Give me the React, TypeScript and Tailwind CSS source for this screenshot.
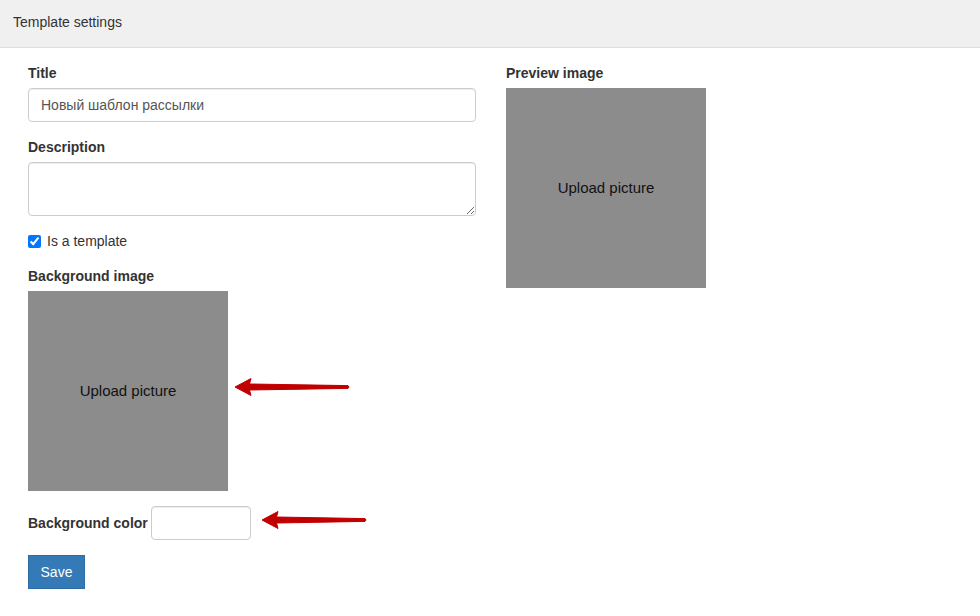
import React from 'react';

const font = { fontFamily: '"Liberation Sans", Arial, sans-serif' };

const Arrow = ({ length }: { length: number }) => (
  <svg width={length + 4} height="22" viewBox={`0 0 ${length + 4} 22`} className="block">
    <path
      d={`M1 11 L17 2.5 L15.5 8 L${length} 9.6 Q${length + 2} 11 ${length} 12.4 L15.5 14 L17 19.5 Z`}
      fill="#c00000"
      stroke="#c00000"
      strokeWidth="1"
      strokeLinejoin="round"
    />
  </svg>
);

const UploadBox = () => (
  <div className="w-[200px] h-[200px] bg-[#8c8c8c] flex items-center justify-center text-[15px] text-[#111]">
    Upload picture
  </div>
);

export default function App() {
  return (
    <div className="min-h-[616px] bg-white text-[14px] text-[#333] leading-[20px]" style={font}>
      {/* Header */}
      <div className="h-[48px] bg-[#f0f0f0] border-b border-[#ddd] px-[13px] flex items-center">
        <span className="-mt-[4px]">Template settings</span>
      </div>

      <div className="flex px-[13px] pt-[15px]">
        {/* Left column */}
        <div className="w-[478px] shrink-0 px-[15px]">
          <div className="mb-[15px]">
            <label className="block font-bold mb-[5px]">Title</label>
            <input
              type="text"
              defaultValue="Новый шаблон рассылки"
              className="block w-full h-[34px] px-[12px] border border-[#ccc] rounded-[4px] text-[#555] shadow-[inset_0_1px_1px_rgba(0,0,0,0.075)] outline-none"
            />
          </div>

          <div className="mb-[15px]">
            <label className="block font-bold mb-[5px]">Description</label>
            <textarea
              className="block w-full h-[54px] px-[12px] py-[6px] border border-[#ccc] rounded-[4px] text-[#555] shadow-[inset_0_1px_1px_rgba(0,0,0,0.075)] outline-none"
            />
          </div>

          <label className="flex items-center gap-[6px] h-[20px] mb-[15px]">
            <input type="checkbox" defaultChecked className="w-[13px] h-[13px] m-0" />
            <span>Is a template</span>
          </label>

          <div className="mb-[15px]">
            <label className="block font-bold mb-[5px]">Background image</label>
            <div className="relative">
              <UploadBox />
              <div className="absolute left-[206px] top-[85px]">
                <Arrow length={114} />
              </div>
            </div>
          </div>

          <div className="relative flex items-center gap-[3px] mb-[15px]">
            <label className="font-bold">Background color</label>
            <input
              type="text"
              className="w-[100px] h-[34px] px-[12px] border border-[#ccc] rounded-[4px] shadow-[inset_0_1px_1px_rgba(0,0,0,0.075)] outline-none"
            />
            <div className="absolute left-[233px] top-[3px]">
              <Arrow length={104} />
            </div>
          </div>

          <button className="w-[57px] h-[34px] bg-[#337ab7] border border-[#2e6da4] text-white">
            Save
          </button>
        </div>

        {/* Right column */}
        <div className="w-[478px] shrink-0 px-[15px]">
          <label className="block font-bold mb-[5px]">Preview image</label>
          <UploadBox />
        </div>
      </div>
    </div>
  );
}
